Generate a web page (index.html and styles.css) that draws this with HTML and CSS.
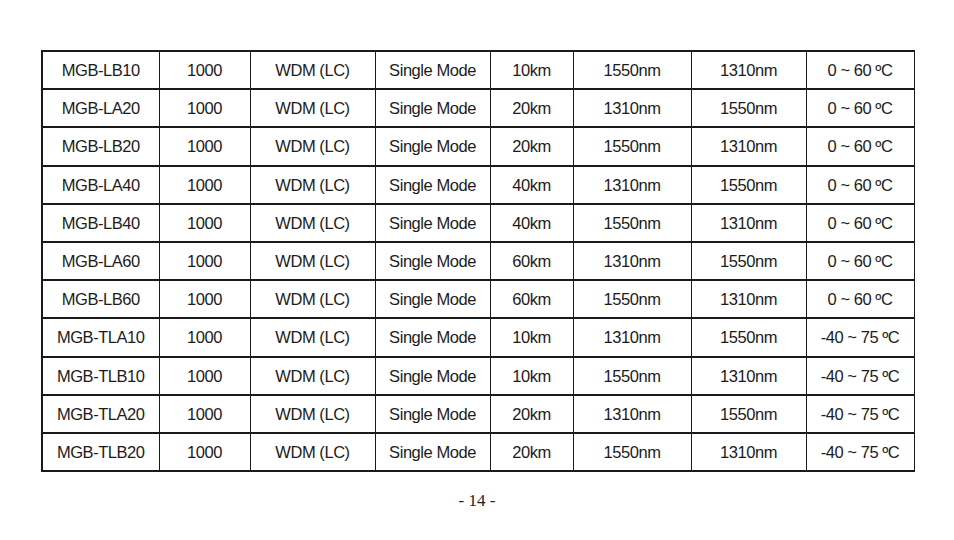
FILE: index.html
```html
<!DOCTYPE html>
<html>
<head>
<meta charset="utf-8">
<link rel="stylesheet" href="styles.css">
</head>
<body>
<div class="page">
<table class="spec">
<colgroup>
<col class="c1"><col class="c2"><col class="c3"><col class="c4"><col class="c5"><col class="c6"><col class="c7"><col class="c8">
</colgroup>
<tbody>
<tr><td>MGB-LB10</td><td>1000</td><td>WDM (LC)</td><td>Single Mode</td><td>10km</td><td>1550nm</td><td>1310nm</td><td>0 ~ 60 ºC</td></tr>
<tr><td>MGB-LA20</td><td>1000</td><td>WDM (LC)</td><td>Single Mode</td><td>20km</td><td>1310nm</td><td>1550nm</td><td>0 ~ 60 ºC</td></tr>
<tr><td>MGB-LB20</td><td>1000</td><td>WDM (LC)</td><td>Single Mode</td><td>20km</td><td>1550nm</td><td>1310nm</td><td>0 ~ 60 ºC</td></tr>
<tr><td>MGB-LA40</td><td>1000</td><td>WDM (LC)</td><td>Single Mode</td><td>40km</td><td>1310nm</td><td>1550nm</td><td>0 ~ 60 ºC</td></tr>
<tr><td>MGB-LB40</td><td>1000</td><td>WDM (LC)</td><td>Single Mode</td><td>40km</td><td>1550nm</td><td>1310nm</td><td>0 ~ 60 ºC</td></tr>
<tr><td>MGB-LA60</td><td>1000</td><td>WDM (LC)</td><td>Single Mode</td><td>60km</td><td>1310nm</td><td>1550nm</td><td>0 ~ 60 ºC</td></tr>
<tr><td>MGB-LB60</td><td>1000</td><td>WDM (LC)</td><td>Single Mode</td><td>60km</td><td>1550nm</td><td>1310nm</td><td>0 ~ 60 ºC</td></tr>
<tr><td>MGB-TLA10</td><td>1000</td><td>WDM (LC)</td><td>Single Mode</td><td>10km</td><td>1310nm</td><td>1550nm</td><td>-40 ~ 75 ºC</td></tr>
<tr><td>MGB-TLB10</td><td>1000</td><td>WDM (LC)</td><td>Single Mode</td><td>10km</td><td>1550nm</td><td>1310nm</td><td>-40 ~ 75 ºC</td></tr>
<tr><td>MGB-TLA20</td><td>1000</td><td>WDM (LC)</td><td>Single Mode</td><td>20km</td><td>1310nm</td><td>1550nm</td><td>-40 ~ 75 ºC</td></tr>
<tr><td>MGB-TLB20</td><td>1000</td><td>WDM (LC)</td><td>Single Mode</td><td>20km</td><td>1550nm</td><td>1310nm</td><td>-40 ~ 75 ºC</td></tr>
</tbody>
</table>
<div class="pagenum">- 14 -</div>
</div>
</body>
</html>
```

FILE: styles.css
```css
html, body {
  margin: 0;
  padding: 0;
  background: #ffffff;
}
.page {
  width: 954px;
  height: 540px;
  padding-top: 50px;
  box-sizing: border-box;
}
.spec {
  margin-left: 41px;
  width: 872px;
  border-collapse: collapse;
  table-layout: fixed;
  font-family: "Liberation Sans", Arial, sans-serif;
  font-size: 16.5px;
  letter-spacing: -0.45px;
  color: #1c1c1c;
}
.spec td {
  height: 35.2px;
  padding: 1px 0 0 0;
  text-align: center;
  vertical-align: middle;
  border-top: 2px solid #1a1a1a;
  border-bottom: 2px solid #1a1a1a;
  border-left: 1.5px solid #1a1a1a;
  border-right: 1.5px solid #1a1a1a;
}
.spec td:first-child {
  border-left: 2px solid #1a1a1a;
}
.c1 { width: 117px; }
.c2 { width: 91px; }
.c3 { width: 125px; }
.c4 { width: 115px; }
.c5 { width: 83px; }
.c6 { width: 118px; }
.c7 { width: 115px; }
.c8 { width: 108px; }
.pagenum {
  margin-top: 19px;
  text-align: center;
  font-family: "Liberation Serif", "Times New Roman", serif;
  font-size: 17px;
  color: #222;
}
```
